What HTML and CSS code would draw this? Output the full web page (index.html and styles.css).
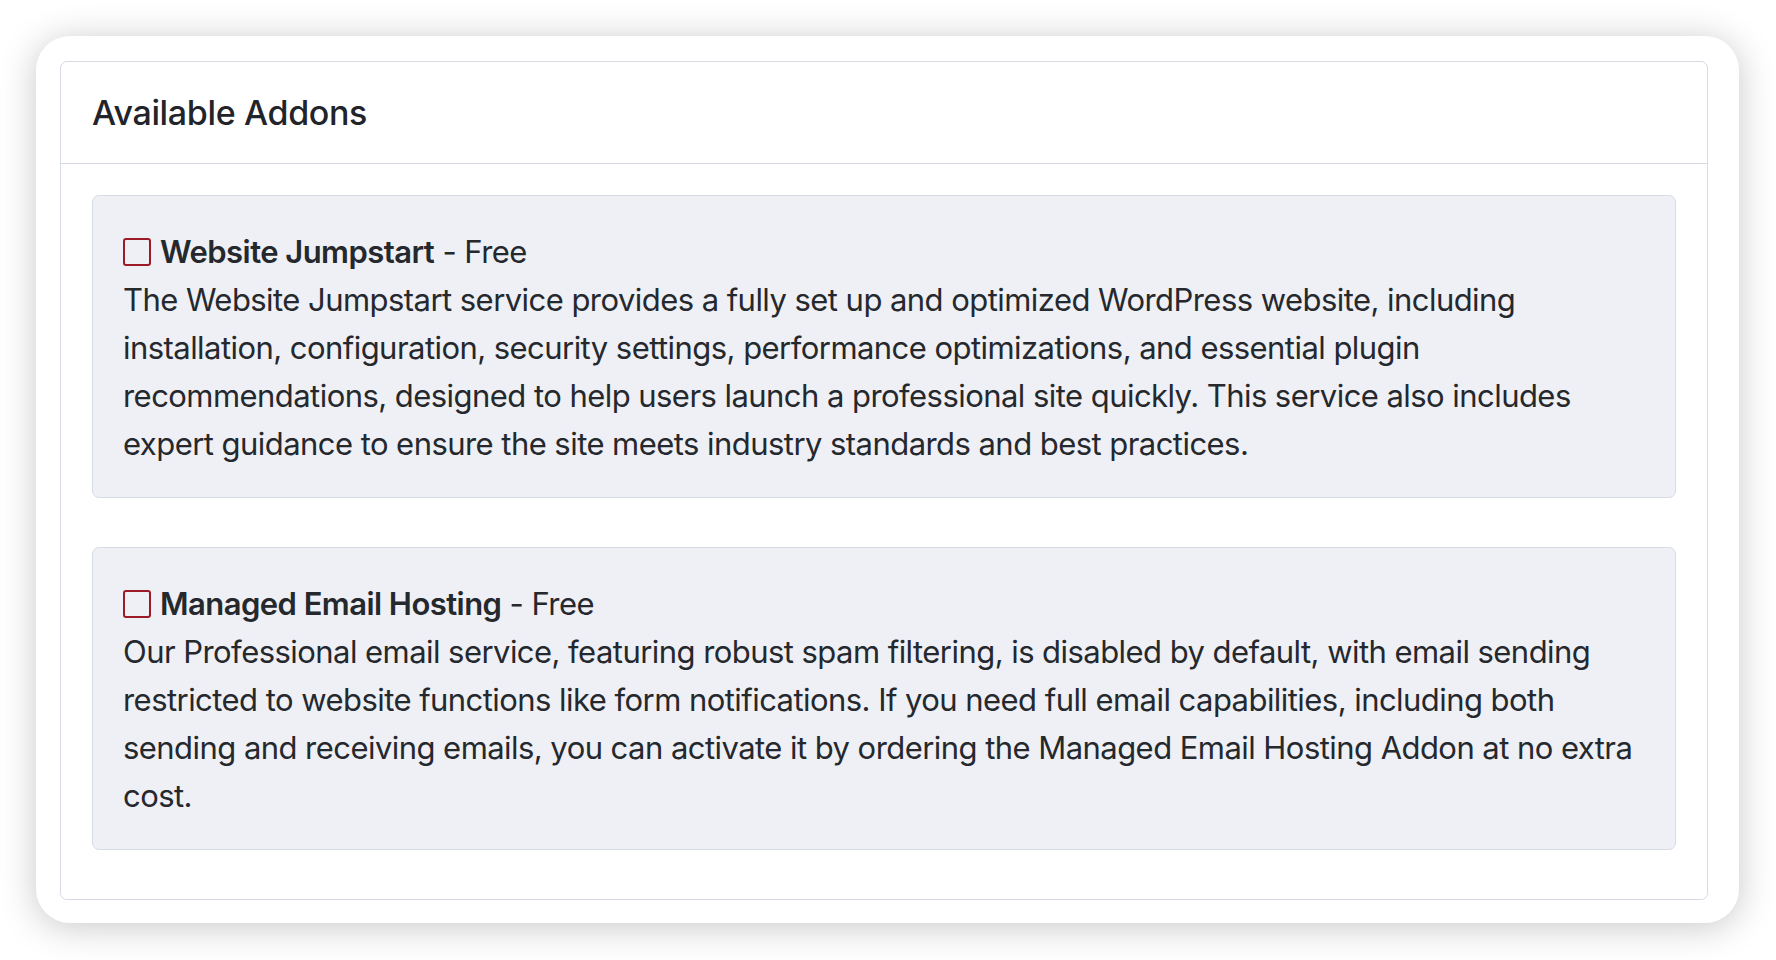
FILE: index.html
```html
<!DOCTYPE html>
<html lang="en">
<head>
<meta charset="utf-8">
<title>Available Addons</title>
<link rel="stylesheet" href="styles.css">
</head>
<body>
<div class="frame">
  <section class="card">
    <header class="card-header">
      <h3 class="card-title">Available Addons</h3>
    </header>
    <div class="card-body">
      <div class="addon">
        <label class="addon-head">
          <span class="check"></span>
          <span><strong>Website Jumpstart</strong> - Free</span>
        </label>
        <p class="addon-desc">The Website Jumpstart service provides a fully set up and optimized WordPress website, including<br>installation, configuration, security settings, performance optimizations, and essential plugin<br>recommendations, designed to help users launch a professional site quickly. This service also includes<br>expert guidance to ensure the site meets industry standards and best practices.</p>
      </div>
      <div class="addon">
        <label class="addon-head">
          <span class="check"></span>
          <span><strong>Managed Email Hosting</strong> - Free</span>
        </label>
        <p class="addon-desc">Our Professional email service, featuring robust spam filtering, is disabled by default, with email sending<br>restricted to website functions like form notifications. If you need full email capabilities, including both<br>sending and receiving emails, you can activate it by ordering the Managed Email Hosting Addon at no extra<br>cost.</p>
      </div>
    </div>
  </section>
</div>
</body>
</html>
```

FILE: styles.css
```css
* { box-sizing: border-box; }
html, body { margin: 0; padding: 0; background: #ffffff; }
body {
  padding: 36px 37px 37px 36px;
  font-family: Inter, "Noto Sans", "Liberation Sans", sans-serif;
  color: #25282d;
}
.frame {
  background: #ffffff;
  border-radius: 34px;
  box-shadow: 0 4px 36px rgba(0, 0, 0, 0.22);
  padding: 25px 31px 23px 24px;
  height: 887px;
}
.card {
  border: 1px solid #d6dbe4;
  border-radius: 7px;
  height: 100%;
  display: flex;
  flex-direction: column;
}
.card-header {
  height: 105px;
  border-bottom: 1px solid #d6dbe4;
  padding: 0 31px 0 31px;
  display: flex;
  align-items: center;
}
.card-title {
  margin: 0;
  font-size: 34px;
  font-weight: 500;
  letter-spacing: -0.35px;
  color: #222429;
}
.card-body {
  padding: 31px 31px 0 31px;
}
.addon {
  background: #eef0f5;
  border: 1px solid #d6dbe4;
  border-radius: 7px;
  padding: 32px 30px 29px 30px;
  margin-bottom: 49px;
}
.addon-head {
  display: flex;
  align-items: center;
  gap: 9px;
  font-size: 31px;
  line-height: 48px;
  letter-spacing: -0.55px;
}
.addon-head strong { font-weight: 600; }
.check {
  width: 28px;
  height: 28px;
  border: 2.5px solid #9b1c26;
  border-radius: 3px;
  flex: none;
}
.addon-desc {
  margin: 0;
  font-size: 31px;
  line-height: 48px;
  letter-spacing: -0.55px;
  white-space: nowrap;
}
```
